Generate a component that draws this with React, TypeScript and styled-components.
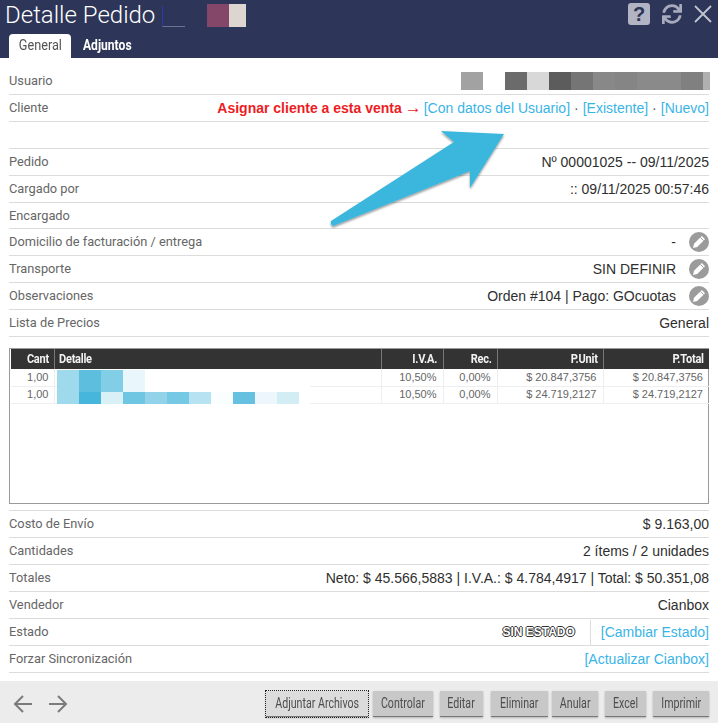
import React from "react";
import styled, { createGlobalStyle } from "styled-components";
import { FaSync } from "react-icons/fa";

const Global = createGlobalStyle`
  html, body { margin: 0; padding: 0; background: #fff; }
  body { font-family: "Liberation Sans", Arial, sans-serif; }
  * { box-sizing: border-box; }
`;

const Page = styled.div`
  position: relative;
  width: 718px;
  height: 723px;
  overflow: hidden;
  background: #fff;
  display: flex;
  flex-direction: column;
`;

const Header = styled.header`
  height: 58px;
  background: #2d3558;
  padding: 0 6px 0 9px;
  display: flex;
  flex-direction: column;
  position: relative;
`;

const TitleRow = styled.div`
  height: 34px;
  display: flex;
  align-items: flex-start;
`;

const Title = styled.h1`
  margin: 0 0 0 -4px;
  font: 300 24px/30px Roboto, sans-serif;
  color: #fff;
  white-space: nowrap;
`;

const TitleLink = styled.span`
  width: 23px;
  height: 21px;
  margin: 6px 0 0 7px;
  border-left: 1px solid #2a3aa8;
  border-bottom: 1px solid #6d7390;
`;

const Pixel = styled.i<{ $c: string; $w?: number }>`
  display: block;
  flex: none;
  width: ${(p) => p.$w ?? 22}px;
  height: 100%;
  background: ${(p) => p.$c};
`;

const TitleMosaic = styled.div`
  display: flex;
  height: 23px;
  margin: 4px 0 0 22px;
`;

const Tools = styled.div`
  margin-left: auto;
  display: flex;
  align-items: center;
  height: 28px;
`;

const HelpIcon = styled.span`
  width: 22px;
  height: 22px;
  border-radius: 3px;
  background: #b2b4c3;
  color: #2d3558;
  font: 700 20px/22px "Liberation Sans", sans-serif;
  text-align: center;
`;

const SyncWrap = styled.span`
  display: flex;
  color: #a8abbc;
  margin-left: 12px;
`;

const CloseWrap = styled.span`
  display: flex;
  margin-left: 12px;
`;

const Tabs = styled.nav`
  display: flex;
  height: 24px;
`;

const Tab = styled.span<{ $active?: boolean }>`
  height: 24px;
  width: ${(p) => (p.$active ? 62 : 84)}px;
  text-align: ${(p) => (p.$active ? "center" : "left")};
  padding-left: ${(p) => (p.$active ? 0 : 12)}px;
  border-radius: 4px 4px 0 0;
  background: ${(p) => (p.$active ? "#fff" : "transparent")};
  color: ${(p) => (p.$active ? "#555" : "#fff")};
  font: ${(p) => (p.$active ? 400 : 700)} 15.5px/23px Roboto, sans-serif;
  span {
    display: inline-block;
    transform: scaleX(${(p) => (p.$active ? 0.82 : 0.78)});
    transform-origin: ${(p) => (p.$active ? "center" : "left")};
  }
`;

const Rows = styled.section<{ $top: number }>`
  padding: ${(p) => p.$top}px 9px 0;
  display: flex;
  flex-direction: column;
`;

const Row = styled.div<{ $h?: number; $lined?: boolean }>`
  height: ${(p) => p.$h ?? 27}px;
  flex: none;
  border-bottom: 1px solid #dcdcdc;
  border-top: ${(p) => (p.$lined ? "1px solid #dcdcdc" : "0")};
  display: flex;
  align-items: center;
  justify-content: space-between;
  color: #333;
  font: 400 14px/26px "Liberation Sans", sans-serif;
  white-space: nowrap;
`;

const Label = styled.span`
  font: 400 12.8px/26px Roboto, sans-serif;
  color: #666;
`;

const Value = styled.span`
  display: flex;
  align-items: center;
  font-size: 14px;
  color: #2f2f2f;
`;

const Warn = styled.b`
  color: #ed1c24;
  margin-right: 4px;
`;

const WarnArrow = styled.span`
  color: #ed1c24;
  font-size: 17px;
  margin: 0 2px 0 -1px;
`;

const Link = styled.a`
  color: #3ab4e6;
`;

const Dot = styled.span`
  color: #555;
  margin: 0 4px;
`;

const EditBtn = styled.span`
  width: 20px;
  height: 20px;
  margin-left: 13px;
  display: flex;
`;

const UserMosaic = styled.div`
  display: flex;
  height: 18px;
  margin: -1px -1px 0 0;
`;

const Grid = styled.div`
  margin: 11px 9px 0;
  height: 156px;
  border: 1px solid #9a9a9a;
  flex: none;
`;

const Table = styled.table`
  width: 698px;
  margin-left: 1px;
  border-collapse: collapse;
  table-layout: fixed;
`;

const Th = styled.th<{ $w: number; $left?: boolean }>`
  width: ${(p) => p.$w}px;
  height: 20px;
  padding: 0 5px 0 4px;
  background: #333;
  color: #f2f2f2;
  border-left: 1px solid #777;
  text-align: ${(p) => (p.$left ? "left" : "right")};
  font: 700 13px/20px Roboto, sans-serif;
  letter-spacing: -0.3px;
  &:first-child { border-left: 0; }
  span {
    display: inline-block;
    transform: scaleX(0.85);
    transform-origin: ${(p) => (p.$left ? "left" : "right")};
  }
`;

const Td = styled.td`
  height: 17px;
  padding: 0 6px 0 3px;
  border: 1px solid #eee;
  border-top: 0;
  text-align: right;
  color: #666;
  font: 400 11px/15px "Liberation Sans", sans-serif;
  &:first-child { border-left: 0; padding-right: 5px; }
  &:last-child { border-right: 0; }
`;

const DetailMosaic = styled.div`
  position: absolute;
  left: 57px;
  top: 370px;
  width: 253px;
  height: 34px;
  background: #fff;
  display: grid;
  grid-template-rows: 22px 12px;
`;

const MosaicRow = styled.div`
  display: flex;
  height: 100%;
`;

const ArrowArt = styled.svg`
  position: absolute;
  left: 320px;
  top: 120px;
  overflow: visible;
`;

const Footer = styled.footer`
  position: absolute;
  left: 0;
  right: 0;
  bottom: 0;
  height: 42px;
  background: #ececec;
  display: flex;
  align-items: flex-start;
  padding: 10px 9px 0 13px;
`;

const Nav = styled.div`
  display: flex;
  gap: 15px;
  margin-top: 3px;
  margin-right: auto;
`;

const Btn = styled.button<{ $w: number; $focus?: boolean; $gap?: number }>`
  width: ${(p) => p.$w}px;
  height: 26px;
  margin-left: ${(p) => p.$gap ?? 7}px;
  padding: 0;
  border: 0;
  border-bottom: 1px solid #777;
  background: ${(p) => (p.$focus ? "#dcdcdc" : "#c8c8c8")};
  box-shadow: 0 1px 2px rgba(0, 0, 0, 0.25);
  color: #4d4d4d;
  font: 400 14px/25px Roboto, sans-serif;
  white-space: nowrap;
  display: flex;
  justify-content: center;
  outline: ${(p) => (p.$focus ? "1px dotted #222" : "none")};
  span {
    display: block;
    flex: none;
    transform: scaleX(0.76);
  }
`;

const StateWrap = styled.span`
  display: flex;
  align-items: center;
  height: 26px;
`;

const StateBadge = styled.span`
  font: 700 12px/14px "Liberation Sans", sans-serif;
  color: #fff;
  text-shadow: 1px 0 0 #333, -1px 0 0 #333, 0 1px 0 #333, 0 -1px 0 #333;
  margin-right: 15px;
`;

const StateLink = styled(Link)`
  border-left: 1px solid #ddd;
  padding-left: 10px;
  line-height: 25px;
  font-size: 14px;
`;

const Pencil = () => (
  <svg width="20" height="20" viewBox="0 0 20 20">
    <circle cx="10" cy="10" r="10" fill="#9b9b9b" />
    <path d="M4 16l1-4.2L12.8 4 16 7.2 8.2 15z" fill="#fff" />
    <path d="M11.4 5.4l3.2 3.2" stroke="#9b9b9b" strokeWidth="1" />
  </svg>
);

const userPixels = ["#a2a2a2", "#fff", "#6b6b6b", "#d8d8d8", "#5c5c5c", "#757575", "#888", "#858585", "#8a8a8a", "#8a8a8a", "#808080"];
const mosaicA = ["#9fd9ec", "#5ebede", "#82cee6", "#e9f6fb"];
const mosaicB = ["#9fd9ec", "#47b6dc", "#d8f0f6", "#6fc6e2", "#92d3ea", "#76c9e5", "#b6e2f1", "#fbfeff", "#66c1e0", "#edf6fc", "#d2edf4"];

const items: [string, string, string, string, string, string][] = [
  ["1,00", "", "10,50%", "0,00%", "$ 20.847,3756", "$ 20.847,3756"],
  ["1,00", "", "10,50%", "0,00%", "$ 24.719,2127", "$ 24.719,2127"],
];

export default function App() {
  return (
    <Page>
      <Global />
      <Header>
        <TitleRow>
          <Title>Detalle Pedido</Title>
          <TitleLink />
          <TitleMosaic>
            <Pixel $c="#84476a" />
            <Pixel $c="#ddd5d0" $w={17} />
          </TitleMosaic>
          <Tools>
            <HelpIcon>?</HelpIcon>
            <SyncWrap>
              <FaSync size={20} />
            </SyncWrap>
            <CloseWrap>
              <svg width="18" height="18" viewBox="0 0 18 18">
                <path d="M1 1l16 16M17 1L1 17" stroke="#c3c5d1" strokeWidth="1.8" fill="none" />
              </svg>
            </CloseWrap>
          </Tools>
        </TitleRow>
        <Tabs>
          <Tab $active><span>General</span></Tab>
          <Tab><span>Adjuntos</span></Tab>
        </Tabs>
      </Header>

      <Rows $top={10}>
        <Row>
          <Label>Usuario</Label>
          <UserMosaic>
            {userPixels.map((c, i) => (
              <Pixel key={i} $c={c} />
            ))}
            <Pixel $c="#b0b0b0" $w={7} />
          </UserMosaic>
        </Row>
        <Row>
          <Label>Cliente</Label>
          <Value>
            <Warn>Asignar cliente a esta venta</Warn>
            <WarnArrow>→</WarnArrow>
            <Link>[Con datos del Usuario]</Link>
            <Dot>·</Dot>
            <Link>[Existente]</Link>
            <Dot>·</Dot>
            <Link>[Nuevo]</Link>
          </Value>
        </Row>
        <Row />
        <Row>
          <Label>Pedido</Label>
          <Value>Nº 00001025 -- 09/11/2025</Value>
        </Row>
        <Row>
          <Label>Cargado por</Label>
          <Value>:: 09/11/2025 00:57:46</Value>
        </Row>
        <Row $h={26}>
          <Label>Encargado</Label>
        </Row>
        <Row>
          <Label>Domicilio de facturación / entrega</Label>
          <Value>-<EditBtn><Pencil /></EditBtn></Value>
        </Row>
        <Row>
          <Label>Transporte</Label>
          <Value>SIN DEFINIR<EditBtn><Pencil /></EditBtn></Value>
        </Row>
        <Row>
          <Label>Observaciones</Label>
          <Value>Orden #104 | Pago: GOcuotas<EditBtn><Pencil /></EditBtn></Value>
        </Row>
        <Row>
          <Label>Lista de Precios</Label>
          <Value>General</Value>
        </Row>
      </Rows>

      <Grid>
        <Table>
          <thead>
            <tr>
              <Th $w={43}><span>Cant</span></Th>
              <Th $w={327} $left><span>Detalle</span></Th>
              <Th $w={62}><span>I.V.A.</span></Th>
              <Th $w={54}><span>Rec.</span></Th>
              <Th $w={106}><span>P.Unit</span></Th>
              <Th $w={106}><span>P.Total</span></Th>
            </tr>
          </thead>
          <tbody>
            {items.map((r, i) => (
              <tr key={i}>
                {r.map((c, j) => (
                  <Td key={j}>{c}</Td>
                ))}
              </tr>
            ))}
          </tbody>
        </Table>
      </Grid>

      <Rows $top={6}>
        <Row $h={28} $lined>
          <Label>Costo de Envío</Label>
          <Value>$ 9.163,00</Value>
        </Row>
        <Row>
          <Label>Cantidades</Label>
          <Value>2 ítems / 2 unidades</Value>
        </Row>
        <Row>
          <Label>Totales</Label>
          <Value>Neto: $ 45.566,5883 | I.V.A.: $ 4.784,4917 | Total: $ 50.351,08</Value>
        </Row>
        <Row>
          <Label>Vendedor</Label>
          <Value>Cianbox</Value>
        </Row>
        <Row>
          <Label>Estado</Label>
          <StateWrap>
            <StateBadge>SIN ESTADO</StateBadge>
            <StateLink>[Cambiar Estado]</StateLink>
          </StateWrap>
        </Row>
        <Row>
          <Label>Forzar Sincronización</Label>
          <Value><Link>[Actualizar Cianbox]</Link></Value>
        </Row>
      </Rows>

      <DetailMosaic>
        <MosaicRow>
          {mosaicA.map((c, i) => (
            <Pixel key={i} $c={c} />
          ))}
        </MosaicRow>
        <MosaicRow>
          {mosaicB.map((c, i) => (
            <Pixel key={i} $c={c} />
          ))}
        </MosaicRow>
      </DetailMosaic>

      <ArrowArt width="200" height="120" viewBox="0 0 200 120">
        <defs>
          <filter id="arrowShadow" x="-10%" y="-10%" width="120%" height="130%">
            <feDropShadow dx="0" dy="1.5" stdDeviation="1.2" floodColor="#000" floodOpacity="0.45" />
          </filter>
        </defs>
        <path
          d="M184 14L121 11L134 22L11 101Q10 104 13 106L150 51L150 68Z"
          fill="#3bb7de"
          filter="url(#arrowShadow)"
        />
      </ArrowArt>

      <Footer>
        <Nav>
          <svg width="20" height="20" viewBox="0 0 20 20">
            <path d="M19 10H2M10 2l-8 8 8 8" stroke="#7b7b7b" strokeWidth="2" fill="none" />
          </svg>
          <svg width="20" height="20" viewBox="0 0 20 20">
            <path d="M1 10h17M10 2l8 8-8 8" stroke="#7b7b7b" strokeWidth="2" fill="none" />
          </svg>
        </Nav>
        <Btn $w={102} $focus><span>Adjuntar Archivos</span></Btn>
        <Btn $w={60} $gap={5}><span>Controlar</span></Btn>
        <Btn $w={43}><span>Editar</span></Btn>
        <Btn $w={57} $gap={8}><span>Eliminar</span></Btn>
        <Btn $w={46} $gap={4}><span>Anular</span></Btn>
        <Btn $w={41}><span>Excel</span></Btn>
        <Btn $w={56}><span>Imprimir</span></Btn>
      </Footer>
    </Page>
  );
}
